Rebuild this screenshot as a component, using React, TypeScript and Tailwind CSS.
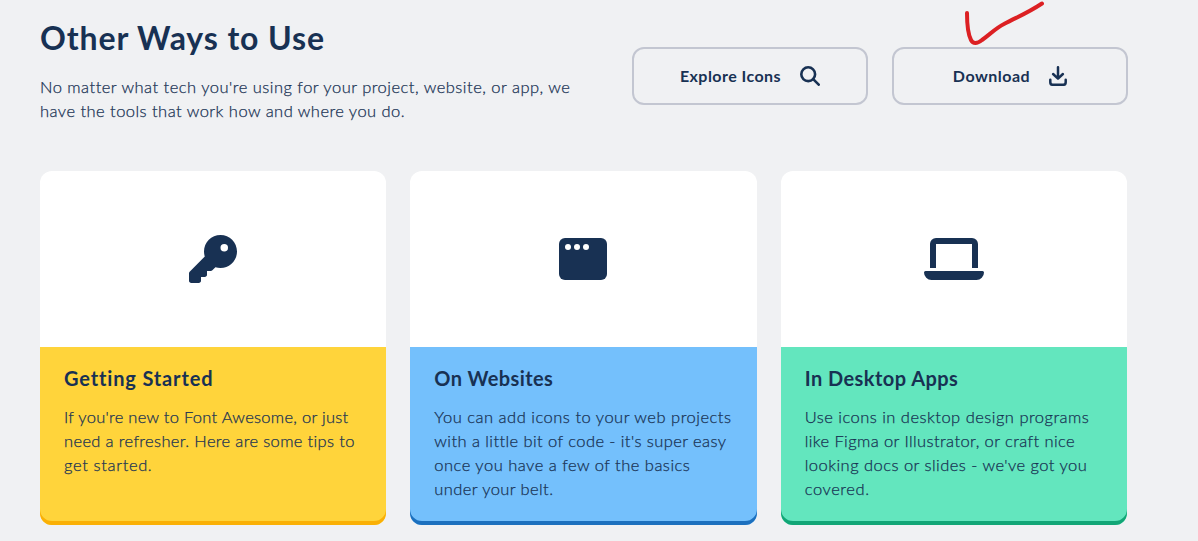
import type { ReactNode } from 'react';
import { FaKey } from 'react-icons/fa6';

type LineProps = { tracking: string; children: ReactNode };

function Line({ tracking, children }: LineProps) {
  return <span className={`block whitespace-nowrap ${tracking}`}>{children}</span>;
}

function SearchIcon() {
  return (
    <svg viewBox="0 0 20 20" className="size-5" fill="none" stroke="currentColor" strokeWidth="2.6" strokeLinecap="round" aria-hidden="true">
      <circle cx="8.2" cy="8.2" r="6.9" />
      <path d="M13.2 13.2 18.7 18.7" />
    </svg>
  );
}

function DownloadIcon() {
  return (
    <svg viewBox="0 0 18 20" className="h-5 w-[18px]" fill="none" stroke="currentColor" strokeWidth="2.5" strokeLinecap="round" strokeLinejoin="round" aria-hidden="true">
      <path d="M9 1.3v11.2M4.1 8 9 12.6 13.9 8" />
      <path d="M1.3 13.8v2.4a2.6 2.6 0 0 0 2.6 2.6h10.2a2.6 2.6 0 0 0 2.6-2.6v-2.4" />
    </svg>
  );
}

function WindowIcon() {
  return (
    <svg viewBox="0 0 48 42" className="h-[42px] w-12" aria-hidden="true">
      <rect width="48" height="42" rx="6" fill="currentColor" />
      <g fill="#fff">
        <circle cx="9" cy="9" r="3" />
        <circle cx="18" cy="9" r="3" />
        <circle cx="27" cy="9" r="3" />
      </g>
    </svg>
  );
}

function LaptopIcon() {
  return (
    <svg viewBox="0 0 60 42" className="h-[42px] w-[60px]" fill="currentColor" aria-hidden="true">
      <path d="M6 6a6 6 0 0 1 6-6h36a6 6 0 0 1 6 6v24h-6V6H12v24H6Z" />
      <path d="M1.5 33h57a1.5 1.5 0 0 1 1.5 1.5 7.5 7.5 0 0 1-7.5 7.5h-45A7.5 7.5 0 0 1 0 34.5 1.5 1.5 0 0 1 1.5 33Z" />
    </svg>
  );
}

type CardProps = { icon: ReactNode; title: ReactNode; tone: string; children: ReactNode };

function Card({ icon, title, tone, children }: CardProps) {
  return (
    <article className="flex h-[354px] flex-col">
      <div className="flex h-44 items-center justify-center rounded-t-xl bg-white">{icon}</div>
      <div className={`flex-1 rounded-b-xl px-6 pt-[17px] ${tone}`}>
        <h2 className="text-xl leading-7 font-bold">{title}</h2>
        <p className="mt-[13px] text-[16.5px] leading-6 font-light [-webkit-text-stroke:0.25px]">{children}</p>
      </div>
    </article>
  );
}

function ActionButton({ children }: { children: ReactNode }) {
  return (
    <button className="flex h-[58px] w-[236px] items-center justify-center gap-[19px] rounded-xl border-2 border-[#c3c6d1] text-base font-bold">
      {children}
    </button>
  );
}

export default function App() {
  return (
    <main className="h-[541px] w-[1198px] overflow-hidden bg-[#f0f1f3] pl-10 font-['Lato',sans-serif] text-[#183153]">
      <header className="flex h-[171px] w-[1088px] justify-between">
        <div className="pt-[18px]">
          <h1 className="text-[32px] leading-10 font-bold tracking-[0.9px]">Other Ways to Use</h1>
          <p className="mt-[17px] text-[16.5px] leading-6 font-light [-webkit-text-stroke:0.25px]">
            <Line tracking="tracking-[0.49px]">No matter what tech you're using for your project, website, or app, we</Line>
            <Line tracking="tracking-[0.46px]">have the tools that work how and where you do.</Line>
          </p>
        </div>
        <div className="flex gap-6 pt-[47px]">
          <ActionButton>
            <span className="tracking-[0.45px]">Explore Icons</span>
            <SearchIcon />
          </ActionButton>
          <div className="relative">
            <ActionButton>
              <span className="tracking-[0.5px]">Download</span>
              <DownloadIcon />
            </ActionButton>
            <svg viewBox="0 0 84 50" className="absolute -top-[47px] left-[70px] h-[50px] w-[84px]" fill="none" stroke="#dc2023" strokeWidth="4" strokeLinecap="round" strokeLinejoin="round" aria-hidden="true">
              <path d="M5 13C5 27 6 34 9 40C11 44 15 44 20 40C27 35 34 28 42 24C55 17 64 14 80 3.5" />
            </svg>
          </div>
        </div>
      </header>

      <section className="grid w-[1087px] grid-cols-3 gap-6">
        <Card
          icon={<FaKey className="size-12" />}
          title={<Line tracking="tracking-[0.85px]">Getting Started</Line>}
          tone="bg-[#ffd43b] shadow-[inset_0_-4px_0_#fab005]"
        >
          <Line tracking="tracking-[0.28px]">If you're new to Font Awesome, or just</Line>
          <Line tracking="tracking-[0.35px]">need a refresher. Here are some tips to</Line>
          <Line tracking="tracking-[0.64px]">get started.</Line>
        </Card>
        <Card
          icon={<WindowIcon />}
          title={<Line tracking="tracking-[0.4px]">On Websites</Line>}
          tone="bg-[#74c0fc] shadow-[inset_0_-4px_0_#1c70be]"
        >
          <Line tracking="tracking-[0.51px]">You can add icons to your web projects</Line>
          <Line tracking="tracking-[0.42px]">with a little bit of code - it's super easy</Line>
          <Line tracking="tracking-[0.49px]">once you have a few of the basics</Line>
          <Line tracking="tracking-[0.41px]">under your belt.</Line>
        </Card>
        <Card
          icon={<LaptopIcon />}
          title={<Line tracking="tracking-[0.45px]">In Desktop Apps</Line>}
          tone="bg-[#63e6be] shadow-[inset_0_-4px_0_#12a676]"
        >
          <Line tracking="tracking-[0.48px]">Use icons in desktop design programs</Line>
          <Line tracking="tracking-[0.41px]">like Figma or Illustrator, or craft nice</Line>
          <Line tracking="tracking-[0.47px]">looking docs or slides - we've got you</Line>
          <Line tracking="tracking-[0.6px]">covered.</Line>
        </Card>
      </section>
    </main>
  );
}
